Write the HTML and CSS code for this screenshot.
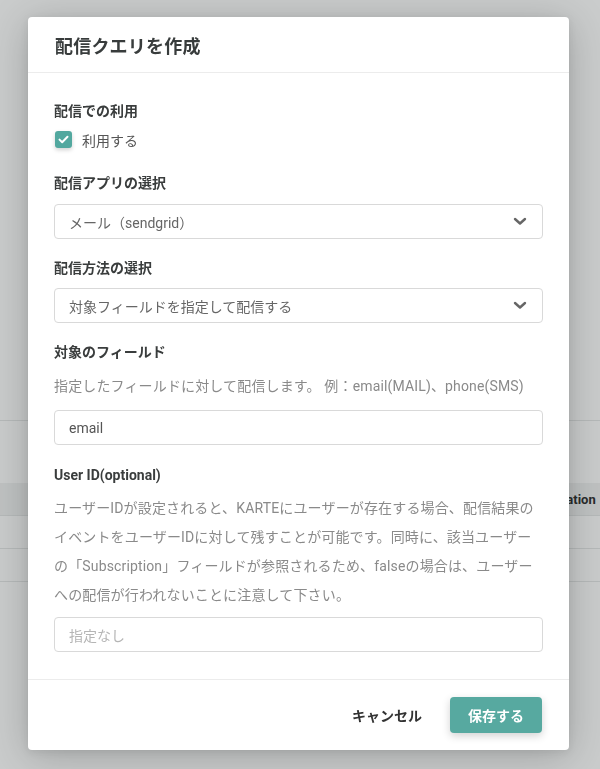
FILE: index.html
```html
<!DOCTYPE html>
<html lang="ja">
<head>
<meta charset="utf-8">
<title>配信クエリを作成</title>
<link rel="stylesheet" href="styles.css">
</head>
<body>
<div class="page">
  <div class="page-top"></div>
  <div class="table">
    <div class="row"></div>
    <div class="row head"><span class="head-cell">Destination</span></div>
    <div class="row"></div>
    <div class="row"></div>
  </div>
</div>

<div class="overlay">
  <div class="modal">
    <div class="modal-header">
      <h1 class="modal-title">配信クエリを作成</h1>
    </div>
    <div class="modal-body">
      <div class="group group-check">
        <div class="label label-check">配信での利用</div>
        <label class="check-row">
          <span class="checkbox">
            <svg width="11" height="9" viewBox="0 0 11 9"><path d="M1.5 4.6 L4.2 7.2 L9.5 1.8" fill="none" stroke="#fff" stroke-width="2" stroke-linecap="round" stroke-linejoin="round"/></svg>
          </span>
          <span class="check-text">利用する</span>
        </label>
      </div>

      <div class="group">
        <div class="label">配信アプリの選択</div>
        <div class="select">
          <span class="select-text">メール（sendgrid）</span>
          <svg class="chev" width="14" height="9" viewBox="0 0 14 9"><path d="M2 2 L7 6.5 L12 2" fill="none" stroke="#666" stroke-width="2.4" stroke-linecap="round" stroke-linejoin="round"/></svg>
        </div>
      </div>

      <div class="group">
        <div class="label label-tight">配信方法の選択</div>
        <div class="select">
          <span class="select-text">対象フィールドを指定して配信する</span>
          <svg class="chev" width="14" height="9" viewBox="0 0 14 9"><path d="M2 2 L7 6.5 L12 2" fill="none" stroke="#666" stroke-width="2.4" stroke-linecap="round" stroke-linejoin="round"/></svg>
        </div>
      </div>

      <div class="group group-field">
        <div class="label label-field">対象のフィールド</div>
        <p class="help help-single">指定したフィールドに対して配信します。 例：email(MAIL)、phone(SMS)</p>
        <div class="input"><span class="input-value">email</span></div>
      </div>

      <div class="group group-last">
        <div class="label label-help">User ID(optional)</div>
        <p class="help help-multi">ユーザーIDが設定されると、KARTEにユーザーが存在する場合、配信結果のイベントをユーザーIDに対して残すことが可能です。同時に、該当ユーザーの「Subscription」フィールドが参照されるため、falseの場合は、ユーザーへの配信が行われないことに注意して下さい。</p>
        <div class="input"><span class="input-placeholder">指定なし</span></div>
      </div>
    </div>
    <div class="modal-footer">
      <button class="btn btn-cancel">キャンセル</button>
      <button class="btn btn-save">保存する</button>
    </div>
  </div>
</div>
</body>
</html>
```

FILE: styles.css
```css
* { box-sizing: border-box; }

html, body {
  margin: 0;
  padding: 0;
  width: 600px;
  height: 769px;
  overflow: hidden;
}

body {
  font-family: Roboto, "Noto Sans CJK JP", sans-serif;
  background: #ffffff;
  color: #333;
}

/* page behind the modal */
.page {
  width: 600px;
}
.page-top {
  height: 420px;
}
.table {
  border-top: 1px solid #e6e8e8;
}
.row {
  height: 33px;
  border-bottom: 1px solid #e6e8e8;
}
.row:first-child {
  height: 62px;
  border-bottom: none;
}
.row.head {
  background: #f2f3f3;
  display: flex;
  align-items: center;
  padding-left: 529px;
  white-space: nowrap;
}
.head-cell {
  font-family: Roboto, sans-serif;
  font-weight: 700;
  font-size: 13px;
  color: #333;
}

/* overlay + modal */
.overlay {
  position: fixed;
  inset: 0;
  background: rgba(12, 22, 22, 0.22);
  padding-top: 17px;
}

.modal {
  width: 541px;
  margin-left: 28px;
  background: #fff;
  border-radius: 4px;
  box-shadow: 0 6px 40px rgba(0, 0, 0, 0.22), 0 2px 8px rgba(0, 0, 0, 0.08);
}

.modal-header {
  height: 56px;
  padding: 0 27px;
  display: flex;
  align-items: center;
  border-bottom: 1px solid #ececec;
}
.modal-title {
  margin: 0;
  font-size: 18px;
  font-weight: 700;
  color: #383c3c;
  letter-spacing: 0.2px;
}

.modal-body {
  padding: 28px 26px 27px 26px;
}

.group {
  margin-bottom: 19px;
}
.group-check {
  margin-bottom: 23px;
}
.group-field {
  margin-bottom: 20px;
}
.group-last {
  margin-bottom: 0;
}

.label {
  font-size: 14px;
  line-height: 20px;
  font-weight: 700;
  color: #3a3d3d;
  margin-bottom: 11px;
}
.label-check {
  margin-bottom: 8px;
}
.label-tight {
  margin-bottom: 10px;
}
.label-field {
  margin-bottom: 10px;
}
.label-help {
  margin-bottom: 9px;
}

.check-row {
  display: flex;
  align-items: center;
  height: 21px;
  padding-left: 1px;
}
.checkbox {
  width: 17px;
  height: 17px;
  border-radius: 3px;
  background: #52a89f;
  display: flex;
  align-items: center;
  justify-content: center;
  box-shadow: 0 2px 4px rgba(0, 0, 0, 0.18);
  margin-right: 10px;
}
.check-text {
  font-size: 14px;
  color: #555;
}

.select,
.input {
  height: 35px;
  border: 1px solid #d9d9d9;
  border-radius: 4px;
  display: flex;
  align-items: center;
  padding: 0 14px;
  font-size: 14px;
  background: #fff;
}
.select {
  justify-content: space-between;
  padding-right: 15px;
}
.select-text {
  color: #666;
}
.chev {
  display: block;
}
.input-value {
  color: #555;
}
.input-placeholder {
  color: #b5b5b5;
}

.help {
  margin: 0;
  font-size: 14px;
  line-height: 29px;
  color: #8a8a8a;
  letter-spacing: 0.15px;
}
.help-single {
  margin-bottom: 9px;
}
.help-multi {
  margin-bottom: 7px;
  padding-right: 2px;
}

.modal-footer {
  border-top: 1px solid #ececec;
  padding: 17px 27px 17px 27px;
  display: flex;
  justify-content: flex-end;
  align-items: center;
}
.btn {
  font-family: Roboto, "Noto Sans CJK JP", sans-serif;
  font-size: 14px;
  font-weight: 700;
  border: none;
  border-radius: 4px;
  height: 36px;
  cursor: pointer;
}
.btn-cancel {
  background: transparent;
  color: #333;
  padding: 0 14px;
  margin-right: 14px;
}
.btn-save {
  background: #57a9a0;
  color: #fff;
  padding: 0 18px;
  width: 92px;
  box-shadow: 0 3px 8px rgba(0, 0, 0, 0.18);
}
```
